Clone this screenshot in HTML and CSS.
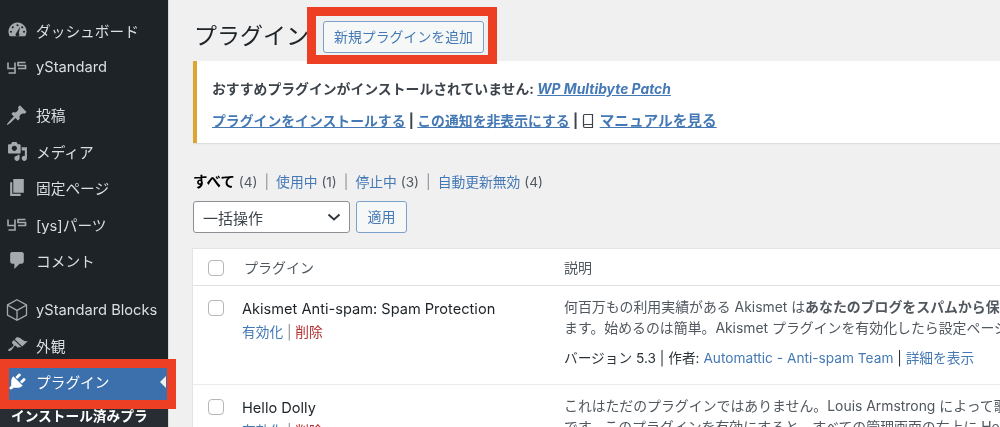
FILE: index.html
```html
<!DOCTYPE html>
<html lang="ja">
<head>
<meta charset="utf-8">
<title>プラグイン</title>
<link rel="stylesheet" href="styles.css">
</head>
<body>
<div class="app">
  <aside class="sidebar">
    <ul class="menu">
      <li class="item"><svg class="icon" viewBox="0 0 20 20"><path d="M10 2.500a8.500 8.500 0 0 0-8.200 11c.2.7.6 1.500 1 2h14.400c.4-.5.8-1.300 1-2A8.500 8.500 0 0 0 10 2.500zM10 4a1 1 0 1 1 0 2 1 1 0 0 1 0-2zM5.500 6a1 1 0 1 1 0 2 1 1 0 0 1 0-2zm9 0a1 1 0 1 1 0 2 1 1 0 0 1 0-2zM3.800 10.200a1 1 0 1 1 0 2 1 1 0 0 1 0-2zm12.400 0a1 1 0 1 1 0 2 1 1 0 0 1 0-2zM12.500 6.500l-1.300 6a1.800 1.800 0 1 1-2.500 0z" fill-rule="evenodd"/></svg><span>ダッシュボード</span></li>
      <li class="item"><svg class="logo" viewBox="0 0 20 14"><path d="M1 1.500v6h7M8 1.500v10.500H1.500M18.500 1.500h-7.500v3h7.500v3H11"/></svg><span>yStandard</span></li>
      <li class="sep"></li>
      <li class="item"><svg class="icon" viewBox="0 0 20 20"><path d="M10.440 3.020l1.820-1.820 6.360 6.350-1.830 1.820c-1.050-.68-2.480-.57-3.410.36l-.75.75c-.92.930-1.040 2.350-.35 3.410l-1.830 1.820-2.410-2.410-2.890 2.890c-1.500 1.500-4.900 4.200-5.300 3.800s2.300-3.700 3.800-5.300l2.890-2.890-2.410-2.410 1.820-1.830c1.050.690 2.480.570 3.410-.36l.75-.75c.930-.920 1.040-2.350.360-3.410z"/></svg><span>投稿</span></li>
      <li class="item"><svg class="icon" viewBox="0 0 20 20"><path d="M13 11V4c0-.55-.45-1-1-1h-1.670L9 1H5L3.670 3H2c-.55 0-1 .45-1 1v7c0 .55.45 1 1 1h10c.55 0 1-.45 1-1zM7 4.500c1.380 0 2.500 1.120 2.500 2.500S8.380 9.500 7 9.500 4.500 8.380 4.500 7 5.620 4.500 7 4.500zM14 6h5v10.500c0 1.380-1.120 2.500-2.500 2.500S14 17.880 14 16.500s1.120-2.500 2.500-2.500c.17 0 .34.020.5.050V9h-3V6zm-4 8.050V13h2v3.500c0 1.380-1.120 2.500-2.500 2.500S7 17.880 7 16.500 8.120 14 9.500 14c.17 0 .34.020.5.050z"/></svg><span>メディア</span></li>
      <li class="item"><svg class="icon" viewBox="0 0 20 20"><path d="M6 15V2h10v13H6zm-1 1h8v2H3V5h2v11z"/></svg><span>固定ページ</span></li>
      <li class="item"><svg class="logo" viewBox="0 0 20 14"><path d="M1 1.500v6h7M8 1.500v10.500H1.500M18.500 1.500h-7.500v3h7.500v3H11"/></svg><span>[ys]パーツ</span></li>
      <li class="item"><svg class="icon" viewBox="0 0 20 20"><path d="M5 2h9c1.100 0 2 .9 2 2v7c0 1.100-.9 2-2 2h-2l-5 5v-5H5c-1.100 0-2-.9-2-2V4c0-1.100.9-2 2-2z"/></svg><span>コメント</span></li>
      <li class="sep"></li>
      <li class="item item-cube"><svg class="icon cube" viewBox="0 0 24 24"><path d="M12 1.800l9.500 5.200v10L12 22.200 2.500 17V7zM2.800 7.200L12 12.400l9.200-5.200M12 12.400v9.600"/></svg><span>yStandard Blocks</span></li>
      <li class="item"><svg class="icon" viewBox="0 0 20 20"><path d="M14.480 11.060L7.410 3.990l1.500-1.500c.5-.56 2.300-.47 3.510.32 1.210.8 1.430 1.280 2.910 2.100 1.180.64 2.450 1.260 4.670.74zm-.71.71L6.700 4.700 4.930 6.470c-.39.39-.39 1.020 0 1.410l1.060 1.060c.39.39.39 1.030 0 1.420-.6.6-1.430 1.110-2.210 1.690-.35.26-.7.53-1.010.84C1.430 13.230.68 14.340 1.430 15.100c.76.75 1.860 0 3.210-1.340.31-.31.59-.66.85-1.010.58-.78 1.090-1.610 1.690-2.210.39-.39 1.020-.39 1.410 0l1.060 1.060c.39.39 1.020.39 1.410 0z"/></svg><span>外観</span></li>
      <li class="item current"><svg class="icon" viewBox="0 0 20 20"><path d="M13.110 4.360L9.870 7.600 8 5.730l3.240-3.240c.35-.34 1.050-.2 1.560.32.52.51.66 1.210.31 1.550zm-8 1.770l.91-1.120 9.010 9.010-1.190.84c-.71.71-2.630 1.160-3.820 1.160H6.140L4.900 17.260c-.59.59-1.540.59-2.120 0-.59-.58-.59-1.530 0-2.120l1.240-1.240v-3.880c0-1.130.4-3.190 1.090-3.890zm7.260 3.970l3.240-3.240c.34-.35 1.040-.21 1.550.31.52.51.66 1.210.31 1.550l-3.240 3.250z"/></svg><span>プラグイン</span><i class="arrow"></i></li>
    </ul>
    <div class="submenu">インストール済みプラグイン</div>
    <div class="mark mark-side"></div>
  </aside>
  <main class="main">
    <header class="head">
      <h1 class="title">プラグイン</h1>
      <a class="add">新規プラグインを追加</a>
      <div class="mark mark-add"></div>
    </header>
    <section class="notice">
      <p class="notice-line">おすすめプラグインがインストールされていません: <a class="link em">WP Multibyte Patch</a></p>
      <p class="notice-line"><a class="link">プラグインをインストールする</a> | <a class="link">この通知を非表示にする</a> | <svg class="book" viewBox="0 0 14 16"><path d="M2.500 13V2.800c0-.7.500-1.300 1.300-1.300h7.700v10H3.800c-.8 0-1.300.6-1.300 1.500s.5 1.500 1.300 1.500h7.700v-3"/></svg> <a class="link manual">マニュアルを見る</a></p>
    </section>
    <nav class="filters">
      <b class="strong">すべて</b> <span class="count">(4)</span><span class="bar">|</span><a>使用中</a> <span class="count">(1)</span><span class="bar">|</span><a>停止中</a> <span class="count">(3)</span><span class="bar">|</span><a>自動更新無効</a> <span class="count">(4)</span>
    </nav>
    <div class="bulk">
      <div class="select"><span>一括操作</span><svg class="chev" viewBox="0 0 14 8"><path d="M1.500 1.500L7 6.500l5.500-5"/></svg></div>
      <a class="apply">適用</a>
    </div>
    <section class="table">
      <div class="row header">
        <div class="check"><i class="box"></i></div>
        <div class="name-h">プラグイン</div>
        <div class="desc-h">説明</div>
      </div>
      <div class="row plugin first">
        <div class="check"><i class="box"></i></div>
        <div class="name">
          <div class="pname">Akismet Anti-spam: Spam Protection</div>
          <div class="actions"><a>有効化</a> <span class="pipe">|</span> <a class="del">削除</a></div>
        </div>
        <div class="desc">
          <p class="dl">何百万もの利用実績がある Akismet は<b>あなたのブログをスパムから保護します</b></p>
          <p class="dl">ます。始めるのは簡単。Akismet プラグインを有効化したら設定ページへ移動します</p>
          <p class="meta">バージョン 5.3 | 作者: <a>Automattic - Anti-spam Team</a> | <a>詳細を表示</a></p>
        </div>
      </div>
      <div class="row plugin">
        <div class="check"><i class="box"></i></div>
        <div class="name">
          <div class="pname">Hello Dolly</div>
          <div class="actions"><a>有効化</a> <span class="pipe">|</span> <a class="del">削除</a></div>
        </div>
        <div class="desc">
          <p class="dl">これはただのプラグインではありません。Louis Armstrong によって歌われた</p>
          <p class="dl">です。このプラグインを有効にすると、すべての管理画面の右上に Hello, Dolly</p>
        </div>
      </div>
    </section>
  </main>
</div>
</body>
</html>
```
FILE: styles.css
```css
* { box-sizing: border-box; }
html, body { margin: 0; height: 427px; overflow: hidden; }
body {
  background: #f0f0f1;
  color: #3c434a;
  font-family: Inter, "Noto Sans CJK JP", sans-serif;
  font-size: 13px;
}
p { margin: 0; }
a { color: #4479b5; }
ul { list-style: none; margin: 0; padding: 0; }

.app { display: flex; height: 427px; overflow: hidden; filter: blur(.35px); }

/* sidebar */
.sidebar {
  position: relative;
  z-index: 1;
  flex: 0 0 169px;
  min-width: 0;
  background: #1d2327;
  color: #dcdfe1;
  padding-top: 12px;
  font-size: 14.700px;
  border-right: 1px solid #d8d8d8;
}
.item {
  position: relative;
  display: flex;
  align-items: center;
  height: 36.500px;
  padding-left: 7px;
}
.item-cube { padding-top: 3px; }
.sep { height: 11.500px; }
.icon { flex: 0 0 21px; width: 21px; height: 21px; margin-right: 8px; fill: #a7aaad; }
.icon.cube { width: 24px; flex-basis: 24px; height: 24px; margin: 0 7px 0 -2px; fill: none; stroke: #a7aaad; stroke-width: 1.300; }
.logo { flex: 0 0 20px; width: 20px; height: 14px; margin: 2px 9px 0 0; fill: none; stroke: #a7aaad; stroke-width: 1.600; }
.current { background: #3c70ad; color: #fff; }
.current .icon { fill: #fff; }
.arrow {
  position: absolute;
  right: 2px;
  top: 50%;
  margin-top: -6px;
  border: 6px solid transparent;
  border-left-width: 0;
  border-right-color: #f0f0f1;
}
.submenu {
  background: #272d32;
  height: 32px;
  padding: 6px 20px 0 11px;
  color: #fff;
  font-weight: 700;
  font-size: 13.700px;
  line-height: 20px;
  overflow: hidden;
}
.mark { position: absolute; z-index: 2; border: 9px solid #ec3f24; pointer-events: none; }
.mark-side { left: 0; top: 359px; width: 176px; height: 50px; }
.mark-add { left: 138px; top: 7px; width: 190px; height: 57px; }

/* main */
.main { position: relative; flex: 1 1 auto; min-width: 0; padding: 0 0 0 24px; overflow: hidden; }
.head { display: flex; align-items: center; height: 61px; }
.title { margin: 0; font-size: 23px; font-weight: 400; color: #1d2327; width: 130px; padding: 7px 0 0 1px; white-space: nowrap; }
.add {
  display: block;
  width: 161px;
  height: 32px;
  margin-top: 13px;
  border: 1px solid #7ba0c9;
  border-radius: 3px;
  background: #f6f7f7;
  color: #4479b5;
  text-align: center;
  font-size: 13.900px;
  line-height: 30px;
}
.notice {
  width: 840px;
  height: 82px;
  background: #fff;
  border-left: 4px solid #dba633;
  box-shadow: 0 1px 1px rgba(0,0,0,.08);
  padding: 17px 0 0 15px;
  font-weight: 700;
  font-size: 13.850px;
  color: #3c434a;
}
.notice-line { line-height: 22px; margin-bottom: 10px; white-space: nowrap; }
.link { text-decoration: underline; }
.em { font-style: italic; }
.manual { margin-left: 1px; font-size: 14.700px; }
.book { width: 14px; height: 16px; vertical-align: -3px; fill: none; stroke: #3c434a; stroke-width: 1.200; }

.filters { margin-top: 28px; height: 22px; line-height: 22px; font-size: 13.800px; white-space: nowrap; }
.strong { color: #000; font-size: 14.500px; }
.count { color: #50575e; font-size: 13.600px; }
.bar { margin: 0 7px; color: #8c8f94; }

.bulk { display: flex; gap: 6px; margin-top: 8px; height: 32px; }
.select {
  width: 157px;
  display: flex;
  align-items: center;
  justify-content: space-between;
  padding: 0 8px 0 9px;
  border: 1px solid #8c8f94;
  border-radius: 3px;
  background: #fff;
  font-size: 15px;
}
.chev { width: 14px; height: 8px; fill: none; stroke: #2c3338; stroke-width: 1.800; }
.apply {
  width: 51px;
  border: 1px solid #7ba0c9;
  border-radius: 3px;
  background: #f6f7f7;
  text-align: center;
  line-height: 30px;
  font-size: 14px;
}

.table {
  width: 840px;
  margin-top: 16px;
  background: #fff;
  box-shadow: 0 0 0 1px #e2e4e7;
}
.row { display: grid; grid-template-columns: 49px 322px 1fr; }
.header { height: 37px; border-bottom: 1px solid #dfe1e3; align-items: center; }
.header .box { margin-top: 1px; }
.name-h { padding-left: 2px; font-size: 14px; color: #50575e; }
.desc-h { font-size: 14px; color: #50575e; }
.plugin { height: 99px; padding-top: 11px; border-bottom: 1px solid #ebebec; }
.check { padding-left: 15px; line-height: 0; }
.plugin .check { padding-top: 3px; }
.box {
  display: block;
  width: 16px;
  height: 16px;
  border: 1px solid #b4b6b9;
  border-radius: 4px;
  background: #fff;
}
.pname { font-size: 14.600px; line-height: 24px; color: #1d2327; white-space: nowrap; }
.actions { font-size: 13.700px; line-height: 22px; }
.pipe { color: #8c8f94; }
.del { color: #b32d2e; }
.desc { white-space: nowrap; overflow: hidden; font-size: 13.900px; color: #50575e; }
.dl { line-height: 21px; }
.meta { margin-top: 9px; line-height: 20px; color: #2c3338; font-size: 13.700px; }
```
